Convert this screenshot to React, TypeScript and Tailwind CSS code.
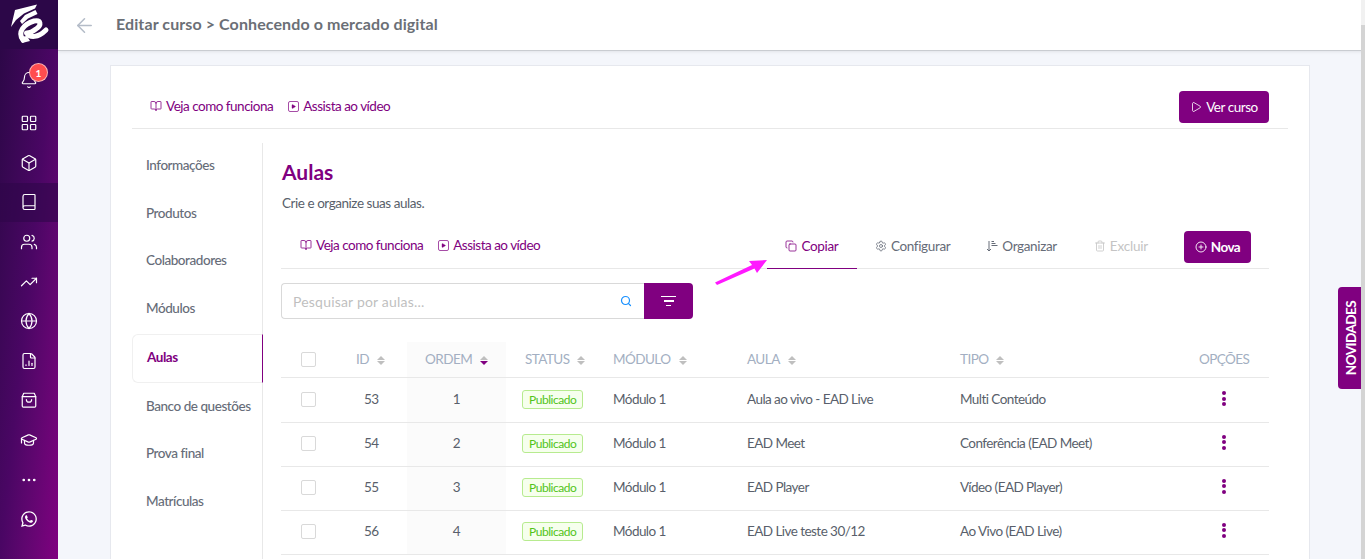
import {
  ArrowLeft,
  Bell,
  Book,
  BookOpen,
  Box,
  CirclePlus,
  Copy,
  Ellipsis,
  FileChartColumn,
  Globe,
  GraduationCap,
  LayoutGrid,
  Play,
  Search,
  Settings,
  Trash2,
  TrendingUp,
  Users,
} from 'lucide-react';
import { FaWhatsapp } from 'react-icons/fa';

const PURPLE = 'text-[#800080]';

const sideIcons = [
  { icon: LayoutGrid },
  { icon: Box },
  { icon: Book, active: true },
  { icon: Users },
  { icon: TrendingUp },
  { icon: Globe },
  { icon: FileChartColumn },
  { icon: BagIcon },
  { icon: CapIcon },
  { icon: Ellipsis },
];

const navItems = ['Informações', 'Produtos', 'Colaboradores', 'Módulos', 'Aulas', 'Banco de questões', 'Prova final', 'Matrículas'];

const rows = [
  { id: 53, order: 1, aula: 'Aula ao vivo - EAD Live', tipo: 'Multi Conteúdo' },
  { id: 54, order: 2, aula: 'EAD Meet', tipo: 'Conferência (EAD Meet)' },
  { id: 55, order: 3, aula: 'EAD Player', tipo: 'Vídeo (EAD Player)' },
  { id: 56, order: 4, aula: 'EAD Live teste 30/12', tipo: 'Ao Vivo (EAD Live)' },
];

function BagIcon({ className }: { className?: string }) {
  return (
    <svg className={className} viewBox="0 0 24 24" fill="none" stroke="currentColor" strokeWidth={1.6} strokeLinejoin="round" strokeLinecap="round">
      <path d="M5 3h14l2 4.5V20a1.5 1.5 0 0 1-1.5 1.5h-15A1.5 1.5 0 0 1 3 20V7.5z" />
      <path d="M3 7.5h18" />
      <path d="M8.5 11.5c0 4.5 7 4.5 7 0" />
    </svg>
  );
}

// tassel hangs on the left in the reference, lucide draws it on the right
function CapIcon({ className }: { className?: string }) {
  return <GraduationCap className={`${className} -scale-x-100`} strokeWidth={1.6} />;
}

function OrganizeIcon({ className }: { className?: string }) {
  return (
    <svg className={className} viewBox="0 0 12 12" fill="none" stroke="currentColor" strokeWidth={1}>
      <path d="M3 1v10M1 9l2 2 2-2" />
      <path d="M5.5 1.5h2.5M5.5 3.5h4M5.5 5.5h6" />
    </svg>
  );
}

function Logo() {
  return (
    <svg viewBox="0 0 58 49" className="w-[58px] h-[49px]" fill="white">
      <path d="M15 10 L37 4.5 L35 8.5 L24 13.5 L16 20 L11 27 Z" />
      <path d="M25 15 L35.5 10 L37.5 14 L28 18.5 L22 24 L20 21 Z" />
      <path
        d="M23 40 C17 32 24 24 34 21 C41 19.5 42 25 36 29 C32 32 28 33 26.5 33 C30 38 38 38 46 30"
        fill="none"
        stroke="white"
        strokeWidth={5}
        strokeLinecap="round"
        strokeLinejoin="round"
      />
      <path d="M19 37 L27 36 L30 41 L22 43 Z" />
    </svg>
  );
}

function Sidebar() {
  return (
    <aside className="w-[58px] h-full shrink-0 flex flex-col bg-gradient-to-br from-[#2a0745] via-[#4a0664] to-[#800080] text-white">
      <div className="h-[49px] bg-[#2c0748] flex items-center justify-center shrink-0">
        <Logo />
      </div>
      <div className="h-[11px]" />
      <div className="relative h-[43.5px] pb-[3.5px] flex items-center justify-center">
        <Bell className="w-[18px] h-[18px]" strokeWidth={1.5} />
        <span className="absolute left-[29px] top-[3px] w-[19px] h-[19px] rounded-full bg-[#ff4d4f] border border-white/60 text-[10px] leading-none font-bold flex items-center justify-center">
          1
        </span>
      </div>
      {sideIcons.map(({ icon: Icon, active }, i) => (
        <div key={i} className={`h-[39.6px] flex items-center justify-center ${active ? 'bg-[#2f0749]/60' : ''}`}>
          <Icon className="w-[18px] h-[18px]" strokeWidth={1.6} />
        </div>
      ))}
      <div className="h-[39.6px] flex items-center justify-center">
        <FaWhatsapp className="w-[18px] h-[18px]" />
      </div>
    </aside>
  );
}

function HelpLinks() {
  return (
    <div className={`-mt-[2px] flex items-center gap-[15px] text-[13.5px] tracking-[-0.5px] ${PURPLE}`}>
      <span className="flex items-center gap-[4px]">
        <BookOpen className="w-[12px] h-[12px]" strokeWidth={1.6} />
        Veja como funciona
      </span>
      <span className="flex items-center gap-[4px]">
        <span className="w-[11px] h-[11px] border border-[#800080]/70 rounded-[2px] flex items-center justify-center">
          <Play className="w-[5px] h-[5px]" fill="currentColor" strokeWidth={2} />
        </span>
        Assista ao vídeo
      </span>
    </div>
  );
}

function SortArrows({ active }: { active?: boolean }) {
  return (
    <span className="inline-flex flex-col gap-[1px] ml-[8px] align-middle">
      <span className="w-0 h-0 border-x-[4px] border-x-transparent border-b-[4px] border-b-[#bfbfbf]" />
      <span className={`w-0 h-0 border-x-[4px] border-x-transparent border-t-[4px] ${active ? 'border-t-[#800080]' : 'border-t-[#bfbfbf]'}`} />
    </span>
  );
}

function Checkbox() {
  return <span className="block w-[15px] h-[15px] border border-[#d9d9d9] rounded-[2px] bg-white" />;
}

function LessonTable() {
  const th = 'font-normal text-left text-[13.5px] tracking-[-0.55px] text-[#a3afc2] pl-[13px] border-b border-[#e8e8e8]';
  const td = 'text-[13.5px] tracking-[-0.55px] text-[#595f6b] pl-[13px] border-b border-[#e8e8e8]';
  return (
    <table className="w-[988px] table-fixed border-collapse mt-[23px]">
      <colgroup>
        <col className="w-[62px]" />
        <col className="w-[64px]" />
        <col className="w-[99px]" />
        <col className="w-[94px]" />
        <col className="w-[134px]" />
        <col className="w-[213px]" />
        <col className="w-[226px]" />
        <col className="w-[96px]" />
      </colgroup>
      <thead>
        <tr className="h-[35px]">
          <th className={`${th} !pl-[20px]`}>
            <Checkbox />
          </th>
          <th className={th}>
            ID
            <SortArrows />
          </th>
          <th className={`${th} !pl-[18px] bg-[#fbfbfb]`}>
            ORDEM
            <SortArrows active />
          </th>
          <th className={`${th} !pl-[19px]`}>
            STATUS
            <SortArrows />
          </th>
          <th className={th}>
            MÓDULO
            <SortArrows />
          </th>
          <th className={th}>
            AULA
            <SortArrows />
          </th>
          <th className={th}>
            TIPO
            <SortArrows />
          </th>
          <th className={`${th} !pl-[26px]`}>OPÇÕES</th>
        </tr>
      </thead>
      <tbody>
        {rows.map((row, i) => {
          const cell = `${td} ${i === 0 ? '' : 'pb-[2px]'}`;
          return (
            <tr key={row.id} className="h-[44px] first:h-[45px]">
              <td className={`${cell} !pl-[20px]`}>
                <Checkbox />
              </td>
              <td className={`${cell} !pl-[21px]`}>{row.id}</td>
              <td className={`${cell} !pl-0 text-center bg-[#fbfbfb]`}>{row.order}</td>
              <td className={`${cell} !pl-[16px]`}>
                <span className="inline-block h-[19px] leading-[17px] px-[6px] text-[12px] tracking-[-0.45px] text-[#52c41a] bg-[#f6ffed] border border-[#b7eb8f] rounded-[3px]">
                  Publicado
                </span>
              </td>
              <td className={cell}>Módulo 1</td>
              <td className={cell}>{row.aula}</td>
              <td className={cell}>{row.tipo}</td>
              <td className={cell}>
                <span className="flex flex-col items-center gap-[1.5px] w-[4px] ml-[36px] -mt-[2px]">
                  <span className="w-[4px] h-[4px] rounded-full bg-[#800080]" />
                  <span className="w-[4px] h-[4px] rounded-full bg-[#800080]" />
                  <span className="w-[4px] h-[4px] rounded-full bg-[#800080]" />
                </span>
              </td>
            </tr>
          );
        })}
      </tbody>
    </table>
  );
}

export default function App() {
  return (
    <div className="relative w-[1365px] h-[559px] overflow-hidden flex bg-[#f4f6fb] font-['Lato','Liberation_Sans',sans-serif]">
      <Sidebar />

      <div className="flex-1 min-w-0 flex flex-col">
        <header className="h-[51px] shrink-0 bg-white border-b border-[#c9ccd1] shadow-[0_1px_3px_rgba(0,0,0,0.08)] flex items-center pl-[15px]">
          <ArrowLeft className="w-[23px] h-[23px] text-[#b4bcc8]" strokeWidth={1.6} />
          <h1 className="ml-[20px] -mt-[2px] text-[16px] font-bold tracking-[0.1px] text-[#6b6f76]">Editar curso &gt; Conhecendo o mercado digital</h1>
        </header>

        <main className="mt-[14px] ml-[52px] w-[1200px] flex-1 bg-white border border-[#e6e8ee] border-b-0 px-[21px]">
          <div className="h-[63px] pt-[20px] border-b border-[#e8e8e8] flex items-center justify-between pl-[18px] pr-[19px]">
            <HelpLinks />
            <button className="h-[32px] w-[90px] rounded-[4px] bg-[#800080] text-white text-[13.5px] tracking-[-0.45px] flex items-center justify-center gap-[4px]">
              <Play className="w-[12px] h-[12px]" strokeWidth={1.6} />
              Ver curso
            </button>
          </div>

          <div className="flex mt-[14px] h-[420px]">
            <nav className="w-[131px] shrink-0 border-r border-[#e8e8e8] text-[13.5px] tracking-[-0.45px] text-[#666c78] font-medium">
              <div className="-mt-[1.5px]">
                {navItems.map((item) => {
                  const isActive = item === 'Aulas';
                  return (
                    <div
                      key={item}
                      className={
                        isActive
                          ? 'h-[49px] mt-[2.5px] -mb-[1px] -mr-px pl-[14px] pb-[3px] flex items-center font-bold text-[#800080] border border-[#f0f0f0] border-r-[#800080] rounded-l-[6px]'
                          : 'h-[47.5px] pl-[14px] flex items-center whitespace-nowrap'
                      }
                    >
                      {item}
                    </div>
                  );
                })}
              </div>
            </nav>

            <section className="ml-[18px] w-[988px]">
              <h2 className={`mt-[15px] ml-[1px] text-[21px] leading-[28px] font-bold ${PURPLE}`}>Aulas</h2>
              <p className="mt-[7px] ml-[1px] text-[13.5px] leading-[20px] text-[#595f6b] tracking-[-0.45px]">Crie e organize suas aulas.</p>

              <div className="mt-[11px] h-[45px] border-b border-[#e8e8e8] flex items-center pl-[18px]">
                <div className="ml-[1px]">
                  <HelpLinks />
                </div>
                <div className="ml-auto h-full flex items-center text-[13.5px] tracking-[-0.35px] text-[#666c78]">
                  <span className={`h-[45px] w-[90px] -mb-px border-b border-[#800080] flex items-center justify-center gap-[4px] ${PURPLE}`}>
                    <Copy className="w-[12px] h-[12px]" strokeWidth={1.6} />
                    Copiar
                  </span>
                  <span className="ml-[18px] flex items-center gap-[4px]">
                    <Settings className="w-[12px] h-[12px]" strokeWidth={1.6} />
                    Configurar
                  </span>
                  <span className="ml-[36px] flex items-center gap-[4px]">
                    <OrganizeIcon className="w-[12px] h-[12px]" />
                    Organizar
                  </span>
                  <span className="ml-[37px] flex items-center gap-[4px] text-[#c4c4c4] tracking-[-0.2px]">
                    <Trash2 className="w-[12px] h-[12px]" strokeWidth={1.6} />
                    Excluir
                  </span>
                  <button className="ml-[36px] mr-[18px] mt-[2px] h-[32px] w-[67px] rounded-[4px] bg-[#800080] text-white font-bold tracking-[-0.55px] flex items-center justify-center gap-[4px]">
                    <CirclePlus className="w-[12px] h-[12px]" strokeWidth={1.8} />
                    Nova
                  </button>
                </div>
              </div>

              <div className="mt-[14px] w-[412px] h-[36px] flex">
                <div className="flex-1 border border-[#d9d9d9] border-r-0 rounded-l-[4px] flex items-center justify-between pl-[11px] pr-[12px]">
                  <span className="text-[14px] text-[#bfbfbf] tracking-[0.2px]">Pesquisar por aulas...</span>
                  <Search className="w-[12px] h-[12px] text-[#1890ff]" strokeWidth={2.4} />
                </div>
                <button className="w-[49px] bg-[#800080] rounded-r-[4px] flex flex-col items-center justify-center gap-[3px]">
                  <span className="w-[15px] h-[1.5px] bg-white" />
                  <span className="w-[10px] h-[1.5px] bg-white" />
                  <span className="w-[5px] h-[1.5px] bg-white" />
                </button>
              </div>

              <LessonTable />
            </section>
          </div>
        </main>
      </div>

      <svg className="absolute left-[714px] top-[258px] w-[54px] h-[28px]" viewBox="0 0 54 28" fill="#ff19ff">
        <path d="M1 24.5 L38 7 L35 3 L53 2 L43 15 L40.5 10.5 L3 27 Z" />
      </svg>

      <div className="absolute right-0 top-[287px] w-[27px] h-[102px] bg-[#800080] rounded-l-[4px] flex items-center justify-center">
        <span className="[writing-mode:vertical-rl] rotate-180 text-white text-[13.5px] font-bold tracking-[-0.55px]">NOVIDADES</span>
      </div>

      <div className="absolute right-0 top-0 bottom-0 w-[4px] bg-[#f1f1f1] flex flex-col">
        <div className="mt-[25px] flex-1 bg-[#d4d4d4]" />
      </div>
    </div>
  );
}
